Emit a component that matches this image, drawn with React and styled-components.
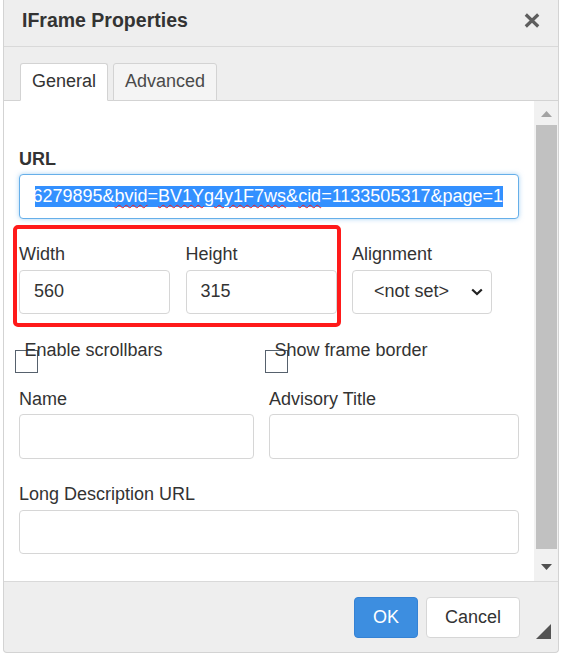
import React from "react";
import styled, { createGlobalStyle } from "styled-components";

const GlobalStyle = createGlobalStyle`
  html, body { margin: 0; padding: 0; background: #ffffff; }
  body { font-family: "Liberation Sans", Arial, sans-serif; color: #333; }
  * { box-sizing: border-box; }
`;

const Page = styled.div`
  width: 563px;
  height: 654px;
  overflow: hidden;
  padding-left: 3px;
  background: #ffffff;
`;

const Dialog = styled.div`
  width: 556px;
  height: 653px;
  display: flex;
  flex-direction: column;
  background: #eeeeee;
  border: 1px solid #d3d3d3;
  border-top: none;
  border-radius: 0 0 4px 4px;
  overflow: hidden;
`;

const TitleBar = styled.div`
  height: 47px;
  flex-shrink: 0;
  display: flex;
  justify-content: space-between;
  align-items: flex-start;
  padding: 8.5px 18px 0 18px;
  border-bottom: 1px solid #d9d9d9;
`;

const Title = styled.div`
  font-size: 19.5px;
  font-weight: bold;
  line-height: 22px;
  color: #333;
`;

const CloseIcon = styled.svg`
  margin-top: 4.5px;
  display: block;
`;

const TabStrip = styled.div`
  height: 54px;
  flex-shrink: 0;
  display: flex;
  align-items: flex-end;
  gap: 5px;
  padding: 16px 0 0 16px;
  border-bottom: 1px solid #d3d3d3;
`;

const Tab = styled.div`
  height: 38px;
  margin-bottom: -1px;
  padding: 6.5px 11px 0;
  border: 1px solid #d3d3d3;
  border-bottom-color: ${(p) => (p.$active ? "#ffffff" : "#d3d3d3")};
  border-radius: 3px 3px 0 0;
  background: ${(p) => (p.$active ? "#ffffff" : "#f4f4f4")};
  font-size: 18px;
  line-height: 21px;
  color: ${(p) => (p.$active ? "#333" : "#4a4a4a")};
`;

const Body = styled.div`
  height: 480px;
  flex-shrink: 0;
  display: flex;
  background: #ffffff;
`;

const Content = styled.div`
  flex: 1;
  min-width: 0;
  display: flex;
  flex-direction: column;
  gap: 25.5px;
  padding: 47.5px 15px 0 15px;
`;

const Field = styled.div`
  display: flex;
  flex-direction: column;
  min-width: 0;
`;

const Label = styled.div`
  font-size: 18px;
  line-height: 21px;
  margin-bottom: 4.5px;
  font-weight: ${(p) => (p.$bold ? "bold" : "normal")};
  color: #333;
  white-space: nowrap;
`;

const TextBox = styled.input`
  display: block;
  width: 100%;
  height: 44.5px;
  margin: 0;
  padding: 0 14px;
  border: 1px solid #d6d6d6;
  border-radius: 4px;
  background: #ffffff;
  font-family: "Liberation Sans", Arial, sans-serif;
  font-size: 18px;
  color: #333;
  outline: none;
`;

const FocusedBox = styled.div`
  height: 44.5px;
  width: 100%;
  display: flex;
  align-items: stretch;
  padding: 0 15px;
  border: 1px solid #66afe9;
  border-radius: 4px;
  background: #ffffff;
  box-shadow: 0 0 5px rgba(102, 175, 233, 0.55);
`;

const ClipArea = styled.div`
  flex: 1 1 0;
  width: 0;
  min-width: 0;
  overflow: hidden;
  display: flex;
  align-items: center;
  justify-content: flex-end;
`;

const Selected = styled.span`
  flex-shrink: 0;
  white-space: nowrap;
  font-size: 18px;
  line-height: 21px;
  color: #ffffff;
  background: #3390ff;
`;

const Misspelled = styled.span`
  text-decoration-line: underline;
  text-decoration-style: wavy;
  text-decoration-color: #ee1c24;
  text-decoration-thickness: 1.2px;
  text-underline-offset: 2px;
`;

const DimRow = styled.div`
  position: relative;
  display: grid;
  grid-template-columns: 151px 151px 140px;
  column-gap: 15.5px;
`;

const Annotation = styled.div`
  position: absolute;
  left: -6px;
  top: -19px;
  width: 328px;
  height: 102px;
  border: 4px solid #ff1a1a;
  border-radius: 5px;
  pointer-events: none;
`;

const SelectBox = styled.div`
  height: 44.5px;
  display: flex;
  align-items: center;
  justify-content: space-between;
  padding: 0 8px 0 21px;
  border: 1px solid #d6d6d6;
  border-radius: 4px;
  background: #ffffff;
  font-size: 18px;
  color: #333;
`;

const PairRow = styled.div`
  display: grid;
  grid-template-columns: 234.5px 1fr;
  column-gap: 15.5px;
`;

const CheckItem = styled.div`
  display: flex;
  align-items: flex-start;
`;

const CheckBox = styled.span`
  flex-shrink: 0;
  width: 23px;
  height: 23px;
  margin: 10px -13px -9.5px -4.5px;
  border: 1px solid #56616d;
  background: transparent;
`;

const CheckText = styled.span`
  font-size: 18px;
  line-height: 21px;
  color: #333;
  white-space: nowrap;
`;

const ScrollTrack = styled.div`
  width: 24px;
  flex-shrink: 0;
  display: flex;
  flex-direction: column;
  padding-bottom: 2px;
  background: #f1f1f1;
`;

const ArrowButton = styled.div`
  height: 23px;
  display: flex;
  align-items: center;
  justify-content: center;
  padding-left: 1px;
  padding-top: ${(p) => (p.$down ? "0" : "2px")};
  padding-bottom: ${(p) => (p.$down ? "2px" : "0")};
`;

const ThumbArea = styled.div`
  flex: 1;
  padding: 1px 1px 0 2px;
`;

const Thumb = styled.div`
  height: 424px;
  background: #c1c1c1;
`;

const Footer = styled.div`
  flex: 1;
  display: flex;
  justify-content: flex-end;
  align-items: flex-start;
  padding: 15px 7px 14px;
  border-top: 1px solid #d9d9d9;
`;

const ButtonGroup = styled.div`
  display: flex;
  gap: 8px;
`;

const Button = styled.button`
  height: 41px;
  padding: 0 18px;
  border-radius: 4px;
  border: 1px solid ${(p) => (p.$primary ? "#3582d4" : "#d6d6d6")};
  background: ${(p) => (p.$primary ? "#3d8ee0" : "#ffffff")};
  color: ${(p) => (p.$primary ? "#ffffff" : "#333")};
  font-family: "Liberation Sans", Arial, sans-serif;
  font-size: 18px;
  line-height: 21px;
  cursor: pointer;
`;

const Grip = styled.svg`
  display: block;
  margin-left: 16px;
  align-self: flex-end;
  margin-bottom: -1px;
`;

function Arrow({ down }) {
  return (
    <ArrowButton $down={down}>
      <svg width="11" height="6" viewBox="0 0 11 6">
        {down ? (
          <polygon points="0,0 11,0 5.5,6" fill="#505050" />
        ) : (
          <polygon points="5.5,0 11,6 0,6" fill="#a3a3a3" />
        )}
      </svg>
    </ArrowButton>
  );
}

export default function App() {
  return (
    <>
      <GlobalStyle />
      <Page>
        <Dialog>
          <TitleBar>
            <Title>IFrame Properties</Title>
            <CloseIcon width="16" height="15" viewBox="0 0 16 15">
              <path
                d="M1.8 1.5 L14.2 13.5 M14.2 1.5 L1.8 13.5"
                stroke="#5e5e5e"
                strokeWidth="3.2"
                fill="none"
              />
            </CloseIcon>
          </TitleBar>

          <TabStrip>
            <Tab $active>General</Tab>
            <Tab>Advanced</Tab>
          </TabStrip>

          <Body>
            <Content>
              <Field>
                <Label $bold>URL</Label>
                <FocusedBox>
                  <ClipArea>
                    <Selected>
                      6279895&amp;<Misspelled>bvid</Misspelled>=
                      <Misspelled>BV1Yg4y1F7ws</Misspelled>&amp;
                      <Misspelled>cid</Misspelled>=1133505317&amp;page=1
                    </Selected>
                  </ClipArea>
                </FocusedBox>
              </Field>

              <DimRow>
                <Field>
                  <Label>Width</Label>
                  <TextBox readOnly value="560" />
                </Field>
                <Field>
                  <Label>Height</Label>
                  <TextBox readOnly value="315" />
                </Field>
                <Field>
                  <Label>Alignment</Label>
                  <SelectBox>
                    <span>&lt;not set&gt;</span>
                    <svg width="12" height="8" viewBox="0 0 12 8">
                      <path
                        d="M1.2 1.5 L6 6 L10.8 1.5"
                        stroke="#222"
                        strokeWidth="2.2"
                        fill="none"
                      />
                    </svg>
                  </SelectBox>
                </Field>
                <Annotation />
              </DimRow>

              <PairRow>
                <CheckItem>
                  <CheckBox />
                  <CheckText>Enable scrollbars</CheckText>
                </CheckItem>
                <CheckItem>
                  <CheckBox />
                  <CheckText>Show frame border</CheckText>
                </CheckItem>
              </PairRow>

              <PairRow>
                <Field>
                  <Label>Name</Label>
                  <TextBox readOnly value="" />
                </Field>
                <Field>
                  <Label>Advisory Title</Label>
                  <TextBox readOnly value="" />
                </Field>
              </PairRow>

              <Field>
                <Label>Long Description URL</Label>
                <TextBox readOnly value="" />
              </Field>
            </Content>

            <ScrollTrack>
              <Arrow />
              <ThumbArea>
                <Thumb />
              </ThumbArea>
              <Arrow down />
            </ScrollTrack>
          </Body>

          <Footer>
            <ButtonGroup>
              <Button $primary>OK</Button>
              <Button>Cancel</Button>
            </ButtonGroup>
            <Grip width="15" height="15" viewBox="0 0 15 15">
              <polygon points="15,0 15,15 0,15" fill="#545454" />
            </Grip>
          </Footer>
        </Dialog>
      </Page>
    </>
  );
}
